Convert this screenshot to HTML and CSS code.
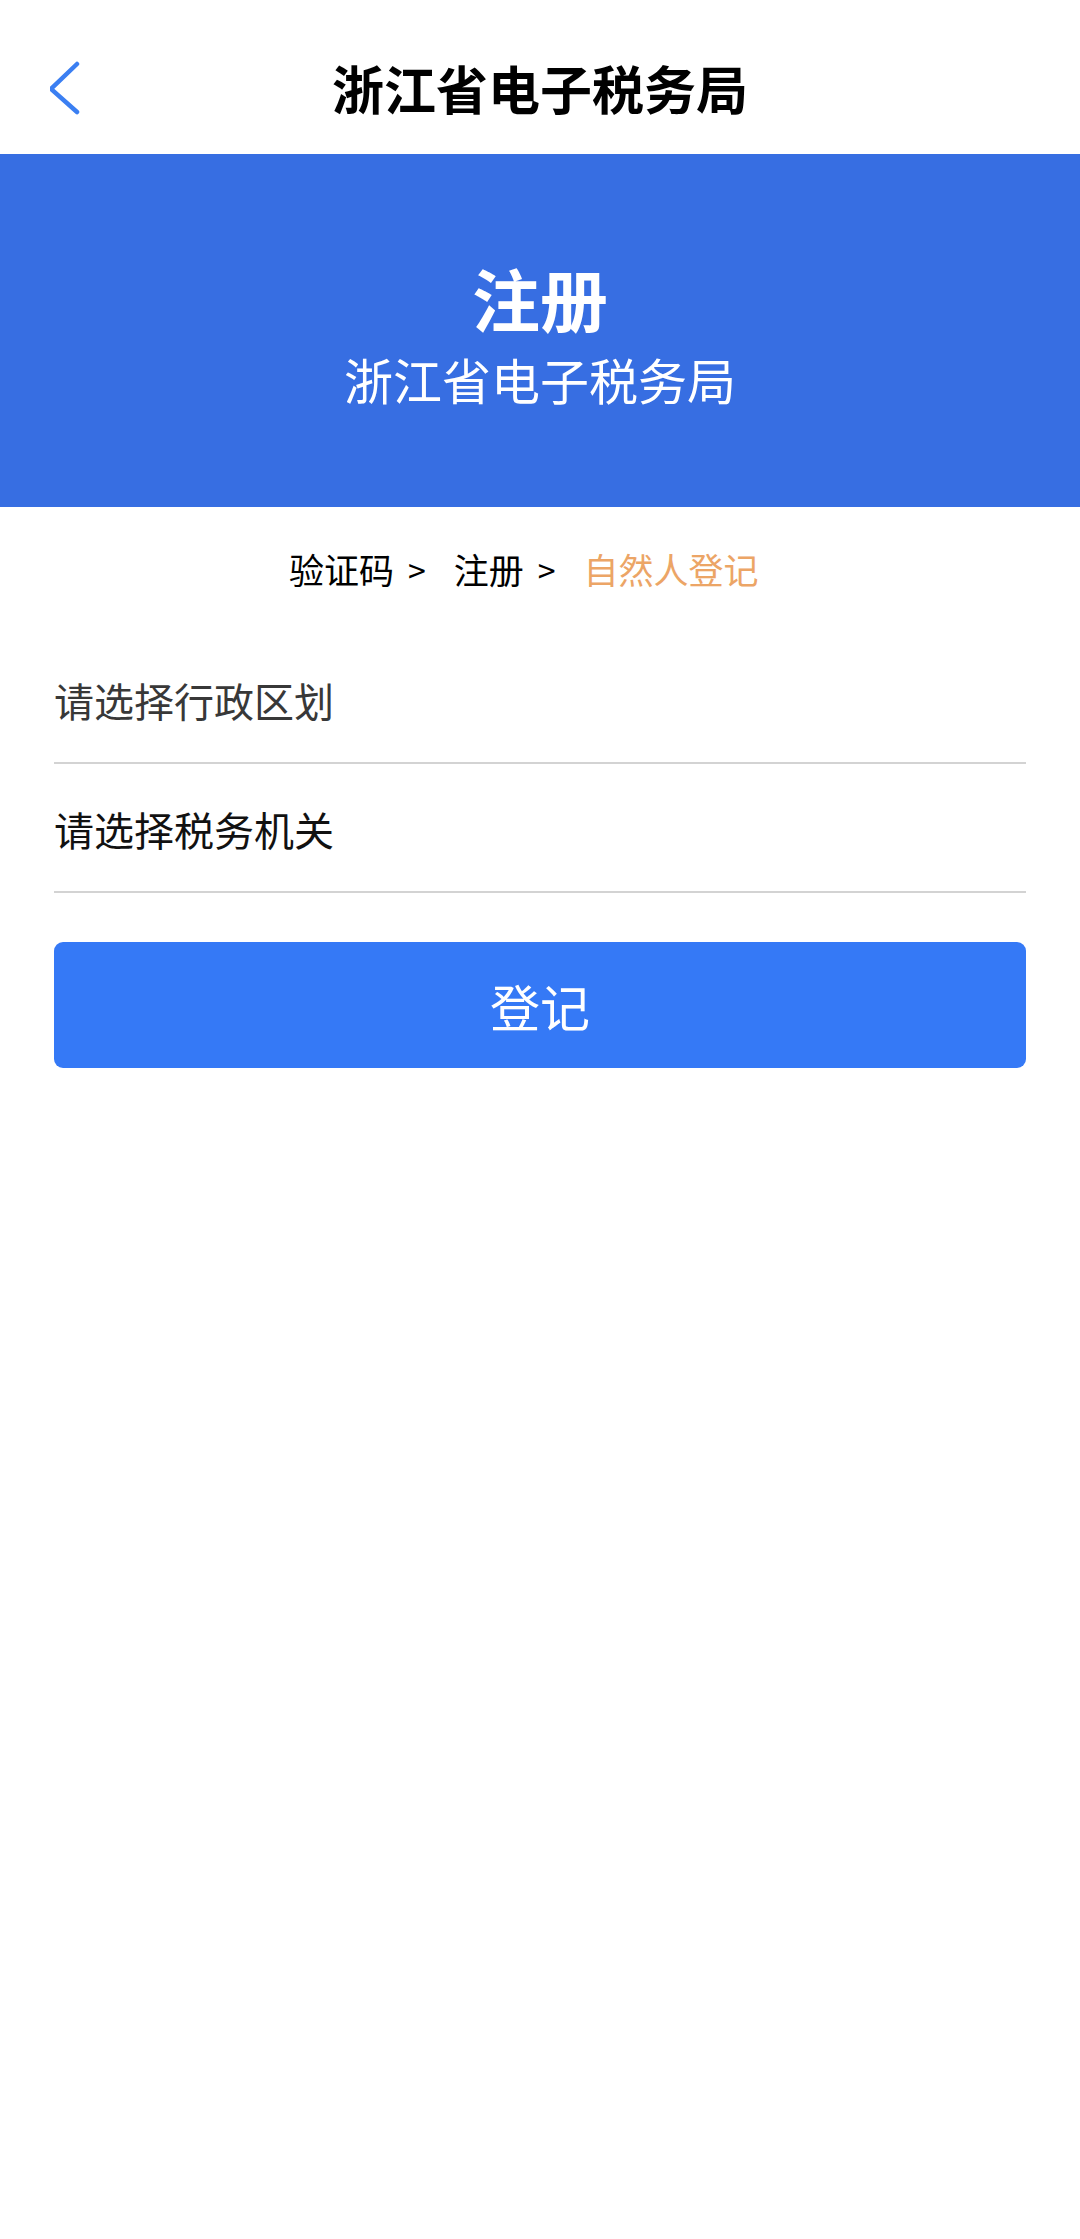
FILE: index.html
```html
<!DOCTYPE html>
<html lang="zh-CN">
<head>
  <meta charset="UTF-8">
  <title>浙江省电子税务局</title>
  <link rel="stylesheet" href="styles.css">
</head>
<body>

  <div class="nav-bar">
    <div class="nav-back">
      <svg width="40" height="60" viewBox="0 0 40 60">
        <polyline points="27,3 1,28 27,51" fill="none" stroke="#3b7ff2" stroke-width="4.5" stroke-linecap="round" stroke-linejoin="round"/>
      </svg>
    </div>
    <div class="nav-title">浙江省电子税务局</div>
    <div></div>
  </div>

  <div class="banner">
    <div class="banner-title">注册</div>
    <div class="banner-sub">浙江省电子税务局</div>
  </div>

  <div class="steps">
    <span>验证码</span>
    <span class="arrow">&gt;</span>
    <span>注册</span>
    <span class="arrow">&gt;</span>
    <span class="current">自然人登记</span>
  </div>

  <div class="form">
    <div class="field placeholder">请选择行政区划</div>
    <div class="field">请选择税务机关</div>
    <button class="submit">登记</button>
  </div>

</body>
</html>
```

FILE: styles.css
```css
body {
  margin: 0;
  background-color: #fff;
  font-family: "Noto Sans CJK SC", "Noto Sans", sans-serif;
  color: #000;
}

.nav-bar {
  display: grid;
  grid-template-columns: 1fr auto 1fr;
  align-items: center;
  height: 134px;
  padding-top: 20px;
}

.nav-back {
  padding-left: 50px;
  padding-top: 8px;
  display: flex;
  align-items: center;
}

.nav-back svg {
  display: block;
}

.nav-title {
  font-size: 52px;
  font-weight: bold;
  line-height: 1;
  padding-top: 2px;
}

.banner {
  height: 353px;
  box-sizing: border-box;
  padding-top: 104px;
  background-color: #376ee2;
  color: #fff;
  text-align: center;
}

.banner-title {
  font-size: 68px;
  font-weight: bold;
  line-height: 80px;
}

.banner-sub {
  font-size: 49px;
  line-height: 82px;
}

.steps {
  height: 128px;
  box-sizing: border-box;
  padding-bottom: 5px;
  display: flex;
  align-items: center;
  padding-left: 289px;
  font-size: 35px;
}

.steps .arrow {
  margin: 0 28px 0 14px;
  font-size: 32px;
}

.steps .current {
  color: #eca566;
}

.form {
  padding: 0 54px;
}

.field {
  height: 129px;
  display: flex;
  align-items: center;
  padding-top: 3px;
  box-sizing: border-box;
  border-bottom: 2px solid #d3d3d3;
  font-size: 40px;
  color: #111;
}

.field.placeholder {
  color: #383838;
}

.submit {
  display: block;
  width: 100%;
  height: 126px;
  margin-top: 49px;
  border: none;
  border-radius: 9px;
  background-color: #3579f6;
  color: #fff;
  font-family: inherit;
  font-size: 50px;
}
```
